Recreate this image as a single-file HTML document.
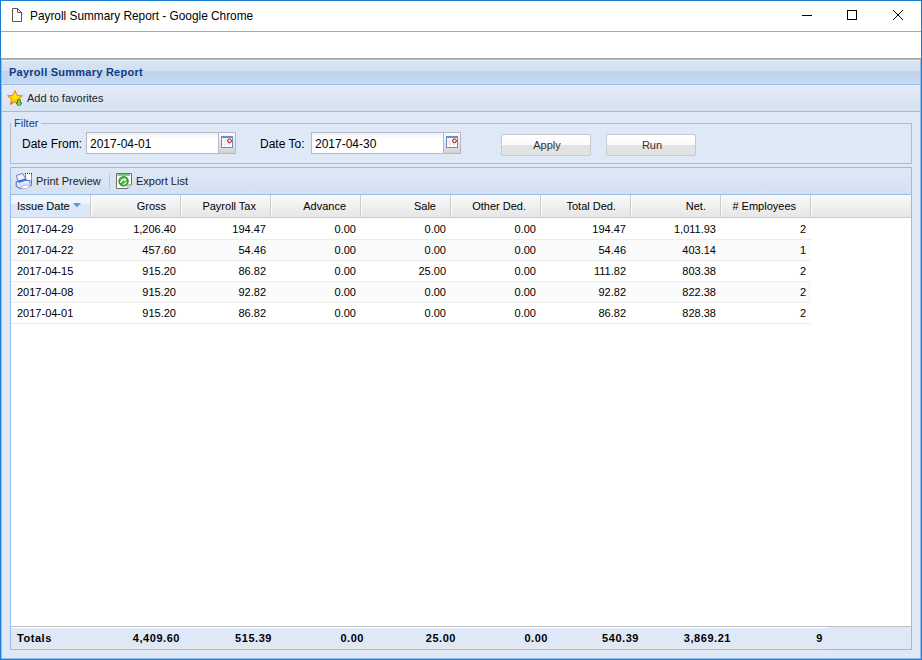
<!DOCTYPE html>
<html><head><meta charset="utf-8">
<style>
*{box-sizing:border-box;margin:0;padding:0}
html,body{width:922px;height:660px;overflow:hidden;background:#fff;font-family:"Liberation Sans",sans-serif;font-size:11px;color:#000}
.a{position:absolute}
.t{position:absolute;white-space:nowrap;line-height:13px}
#win{position:absolute;left:0;top:0;width:922px;height:660px;border:1px solid #1a7bd0;background:#fff}
</style></head><body>
<div id="win"></div>
<!-- title bar -->
<svg class="a" style="left:12px;top:8px" width="11" height="14" viewBox="0 0 11 14">
<path d="M0.5 0.5 H5.5 L9.5 4.5 V13.5 H0.5 Z M5.5 0.5 V4.5 H9.5" fill="none" stroke="#555" stroke-width="1"/>
</svg>
<div class="t" style="left:30px;top:9px;font-size:11.85px;line-height:14px;color:#000">Payroll Summary Report - Google Chrome</div>
<div class="a" style="left:802px;top:15px;width:10px;height:1px;background:#000"></div>
<div class="a" style="left:847px;top:10px;width:10px;height:10px;border:1px solid #000"></div>
<svg class="a" style="left:892px;top:9px" width="12" height="12" viewBox="0 0 12 12"><path d="M1 1 L11 11 M11 1 L1 11" stroke="#000" stroke-width="1"/></svg>
<div class="a" style="left:1px;top:31px;width:920px;height:1px;background:#a9a9a9"></div>
<div class="a" style="left:1px;top:58px;width:920px;height:1px;background:#a8a49e"></div>

<!-- main panel -->
<div class="a" style="left:1px;top:59px;width:920px;height:600px;border:1px solid #99bbe8;background:#dfe8f6"></div>
<!-- panel header -->
<div class="a" style="left:2px;top:60px;width:918px;height:24px;background:linear-gradient(#eef4fb 0px,#eef4fb 1px,#d9e5f4 1px,#d1dff2 11px,#bdd2ee 11px,#bdd2ee 12px,#c1d4ef 12px,#c5d8f0 23px,#cadbf2 23px)"></div>
<div class="a" style="left:1px;top:84px;width:920px;height:1px;background:#99bbe8"></div>
<div class="t" style="left:9px;top:66px;font-weight:bold;letter-spacing:0.25px;color:#0f3c87">Payroll Summary Report</div>
<!-- toolbar 1 -->
<div class="a" style="left:2px;top:85px;width:918px;height:26px;background:linear-gradient(#e4ecf7,#d6e3f3)"></div>
<div class="a" style="left:1px;top:111px;width:920px;height:1px;background:#99bbe8"></div>
<svg class="a" style="left:7px;top:90px" width="16" height="16" viewBox="0 0 16 16">
<defs><radialGradient id="sg" cx="0.5" cy="0.4" r="0.65"><stop offset="0" stop-color="#fff600"/><stop offset="0.55" stop-color="#ffc800"/><stop offset="1" stop-color="#f06000"/></radialGradient></defs>
<path d="M8 0.6 L10.1 5.4 L15.4 5.8 L11.4 9.3 L12.6 14.6 L8 11.8 L3.4 14.6 L4.6 9.3 L0.6 5.8 L5.9 5.4 Z" fill="url(#sg)" stroke="#ef6a10" stroke-width="0.8" stroke-linejoin="round"/>
<path d="M10.6 9.8 H13.4 V13 H15 L12 16.6 L9 13 H10.6 Z" fill="#82e050" stroke="#1f6a12" stroke-width="0.8"/>
</svg>
<div class="t" style="left:27px;top:92px;color:#222">Add to favorites</div>

<!-- fieldset -->
<div class="a" style="left:10px;top:123px;width:902px;height:41px;border:1px solid #b5b8c8"></div>
<div class="a" style="left:11px;top:118px;width:30px;height:10px;background:#dfe8f6"></div>
<div class="t" style="left:14px;top:117px;color:#15428b">Filter</div>
<div class="t" style="left:22px;top:137px;font-size:12px;line-height:15px;color:#000">Date From:</div>
<div class="a" style="left:86px;top:132px;width:150px;height:22px;border:1px solid #b5b8c8;background:linear-gradient(#eef0f0,#fff 6px)"></div>
<div class="t" style="left:90px;top:137px;font-size:12px;line-height:15px;color:#000">2017-04-01</div>
<div class="a" style="left:218px;top:132px;width:18px;height:22px;border:1px solid #b5b8c8;background:linear-gradient(#fdfdfd,#e6e6e6 10px,#d3d3d3)"></div>
<svg class="a" style="left:221px;top:136px" width="12" height="12" viewBox="0 0 12 12">
<rect x="0.5" y="0.5" width="11" height="11" fill="#fff" stroke="#6a8dc4"/><rect x="0" y="0" width="12" height="2" fill="#6a8dc4"/>
<path d="M4 2 V11 M7.5 2 V11 M1 5 H11 M1 8 H11" stroke="#e2e2ee" stroke-width="1"/>
<circle cx="8.5" cy="4.8" r="1.9" fill="none" stroke="#a80000" stroke-width="1"/>
</svg>
<div class="t" style="left:260px;top:137px;font-size:12px;line-height:15px;color:#000">Date To:</div>
<div class="a" style="left:311px;top:132px;width:150px;height:22px;border:1px solid #b5b8c8;background:linear-gradient(#eef0f0,#fff 6px)"></div>
<div class="t" style="left:315px;top:137px;font-size:12px;line-height:15px;color:#000">2017-04-30</div>
<div class="a" style="left:443px;top:132px;width:18px;height:22px;border:1px solid #b5b8c8;background:linear-gradient(#fdfdfd,#e6e6e6 10px,#d3d3d3)"></div>
<svg class="a" style="left:446px;top:136px" width="12" height="12" viewBox="0 0 12 12">
<rect x="0.5" y="0.5" width="11" height="11" fill="#fff" stroke="#6a8dc4"/><rect x="0" y="0" width="12" height="2" fill="#6a8dc4"/>
<path d="M4 2 V11 M7.5 2 V11 M1 5 H11 M1 8 H11" stroke="#e2e2ee" stroke-width="1"/>
<circle cx="8.5" cy="4.8" r="1.9" fill="none" stroke="#a80000" stroke-width="1"/>
</svg>
<div class="a" style="left:501px;top:134px;width:90px;height:22px;border:1px solid #c9c9c9;border-radius:2px;background:linear-gradient(#fff 0,#fbfbfb 10px,#e3e3e3 10px,#e3e3e3)"></div>
<div class="t" style="left:502px;top:139px;width:90px;text-align:center;color:#333">Apply</div>
<div class="a" style="left:606px;top:134px;width:90px;height:22px;border:1px solid #c9c9c9;border-radius:2px;background:linear-gradient(#fff 0,#fbfbfb 10px,#e3e3e3 10px,#e3e3e3)"></div>
<div class="t" style="left:607px;top:139px;width:90px;text-align:center;color:#333">Run</div>

<!-- grid panel -->
<div class="a" style="left:10px;top:167px;width:902px;height:483px;border:1px solid #99bbe8;background:#fff"></div>
<div class="a" style="left:11px;top:168px;width:900px;height:26px;background:linear-gradient(#dfe8f5,#d4e1f2)"></div>
<div class="a" style="left:11px;top:194px;width:900px;height:1px;background:#99bbe8"></div>
<div id="tb2">
<svg class="a" style="left:14px;top:171px" width="20" height="20" viewBox="14 171 20 20">
<rect x="25" y="173" width="7" height="7.5" fill="#fff"/>
<path d="M25 173.5 H32 M31.5 173.5 V180.5 M25.5 173.5 V179" stroke="#222" stroke-width="1" stroke-dasharray="1 1" fill="none"/>
<path d="M16.3 175.5 L22.6 173.4 L26.4 180.2 L18.6 182.2 Z" fill="#f4f2fc" stroke="#6d7bd6" stroke-width="1" stroke-linejoin="round"/>
<path d="M16.2 181.6 L24 179.8 L31.4 181 L31.6 185.4 L21 188.8 L16.2 186.4 Z" fill="#e3e1f6" stroke="#5567cf" stroke-width="1" stroke-linejoin="round"/>
<path d="M17.5 183.2 L24 181.4 L30.2 182.4" stroke="#f4f3fd" stroke-width="1" fill="none"/>
<path d="M18.4 182 L26.2 179.4" stroke="#1d7de8" stroke-width="2.2"/>
<path d="M21.5 186 L31.2 184.6 L26.5 188.6 L21.2 188.4 Z" fill="#fcfcff" stroke="#98a2e2" stroke-width="0.7"/>
<circle cx="29.6" cy="182.6" r="0.8" fill="#30b060"/>
</svg>
<div class="t" style="left:36px;top:175px;color:#222">Print Preview</div>
<div class="a" style="left:109px;top:174px;width:1px;height:15px;background:#b0c8ea"></div>
<svg class="a" style="left:116px;top:173px" width="16" height="16" viewBox="0 0 16 16">
<path d="M0.5 0.5 H15.5 V11.8 L11.8 15.5 H0.5 Z" fill="#fdfdfd" stroke="#6e6e6e" stroke-width="1"/>
<rect x="1.5" y="1.3" width="12.5" height="1.3" fill="#3eb04a"/>
<circle cx="7.6" cy="8.3" r="5.2" fill="#22a022"/>
<circle cx="7" cy="7.3" r="3.2" fill="#5cc65c" opacity="0.6"/>
<path d="M4.6 9.8 Q5.2 6.2 9 6.6" stroke="#eefaee" stroke-width="1.5" fill="none"/>
<path d="M8.2 4.8 L11 6.8 L8.4 8.6 Z" fill="#eefaee"/>
<path d="M10.6 8.6 Q10 11.6 6.4 11.2" stroke="#eefaee" stroke-width="1.2" fill="none"/>
<path d="M11.8 15.5 V11.8 H15.5" fill="#e8e8e8" stroke="#8a8a8a" stroke-width="0.8"/>
</svg>
<div class="t" style="left:136px;top:175px;color:#222">Export List</div>
</div>
<div id="gridbody">
<div class="a" style="left:11px;top:195px;width:900px;height:22px;background:linear-gradient(#fafafa,#f2f2f2 40%,#e6e6e6)"></div>
<div class="a" style="left:11px;top:195px;width:79px;height:22px;background:linear-gradient(#eef5fd 0,#eef5fd 9px,#dbe8f9 9px,#dbe8f9)"></div>
<div class="a" style="left:11px;top:217px;width:900px;height:1px;background:#c8c8c8"></div>
<div class="a" style="left:90px;top:195px;width:1px;height:22px;background:#cbcbcb"></div>
<div class="a" style="left:91px;top:195px;width:1px;height:22px;background:#fdfdfd"></div>
<div class="t" style="left:17px;top:200px;color:#000">Issue Date</div>
<svg class="a" style="left:73px;top:203px" width="8" height="5" viewBox="0 0 8 5"><path d="M0 0 H8 L4 4.5 Z" fill="#6a93cf"/></svg>
<div class="a" style="left:180px;top:195px;width:1px;height:22px;background:#cbcbcb"></div>
<div class="a" style="left:181px;top:195px;width:1px;height:22px;background:#fdfdfd"></div>
<div class="t" style="left:91px;top:200px;width:75px;text-align:right;color:#000">Gross</div>
<div class="a" style="left:270px;top:195px;width:1px;height:22px;background:#cbcbcb"></div>
<div class="a" style="left:271px;top:195px;width:1px;height:22px;background:#fdfdfd"></div>
<div class="t" style="left:181px;top:200px;width:75px;text-align:right;color:#000">Payroll Tax</div>
<div class="a" style="left:360px;top:195px;width:1px;height:22px;background:#cbcbcb"></div>
<div class="a" style="left:361px;top:195px;width:1px;height:22px;background:#fdfdfd"></div>
<div class="t" style="left:271px;top:200px;width:75px;text-align:right;color:#000">Advance</div>
<div class="a" style="left:450px;top:195px;width:1px;height:22px;background:#cbcbcb"></div>
<div class="a" style="left:451px;top:195px;width:1px;height:22px;background:#fdfdfd"></div>
<div class="t" style="left:361px;top:200px;width:75px;text-align:right;color:#000">Sale</div>
<div class="a" style="left:540px;top:195px;width:1px;height:22px;background:#cbcbcb"></div>
<div class="a" style="left:541px;top:195px;width:1px;height:22px;background:#fdfdfd"></div>
<div class="t" style="left:451px;top:200px;width:75px;text-align:right;color:#000">Other Ded.</div>
<div class="a" style="left:630px;top:195px;width:1px;height:22px;background:#cbcbcb"></div>
<div class="a" style="left:631px;top:195px;width:1px;height:22px;background:#fdfdfd"></div>
<div class="t" style="left:541px;top:200px;width:75px;text-align:right;color:#000">Total Ded.</div>
<div class="a" style="left:720px;top:195px;width:1px;height:22px;background:#cbcbcb"></div>
<div class="a" style="left:721px;top:195px;width:1px;height:22px;background:#fdfdfd"></div>
<div class="t" style="left:631px;top:200px;width:75px;text-align:right;color:#000">Net.</div>
<div class="a" style="left:810px;top:195px;width:1px;height:22px;background:#cbcbcb"></div>
<div class="a" style="left:811px;top:195px;width:1px;height:22px;background:#fdfdfd"></div>
<div class="t" style="left:721px;top:200px;width:75px;text-align:right;color:#000"># Employees</div>
<div class="a" style="left:11px;top:219px;width:800px;height:20px;background:#fff"></div>
<div class="a" style="left:11px;top:239px;width:800px;height:1px;background:#ededed"></div>
<div class="t" style="left:17px;top:223px">2017-04-29</div>
<div class="t" style="left:91px;top:223px;width:85px;text-align:right">1,206.40</div>
<div class="t" style="left:181px;top:223px;width:85px;text-align:right">194.47</div>
<div class="t" style="left:271px;top:223px;width:85px;text-align:right">0.00</div>
<div class="t" style="left:361px;top:223px;width:85px;text-align:right">0.00</div>
<div class="t" style="left:451px;top:223px;width:85px;text-align:right">0.00</div>
<div class="t" style="left:541px;top:223px;width:85px;text-align:right">194.47</div>
<div class="t" style="left:631px;top:223px;width:85px;text-align:right">1,011.93</div>
<div class="t" style="left:721px;top:223px;width:85px;text-align:right">2</div>
<div class="a" style="left:11px;top:240px;width:800px;height:20px;background:#fafafa"></div>
<div class="a" style="left:11px;top:260px;width:800px;height:1px;background:#ededed"></div>
<div class="t" style="left:17px;top:244px">2017-04-22</div>
<div class="t" style="left:91px;top:244px;width:85px;text-align:right">457.60</div>
<div class="t" style="left:181px;top:244px;width:85px;text-align:right">54.46</div>
<div class="t" style="left:271px;top:244px;width:85px;text-align:right">0.00</div>
<div class="t" style="left:361px;top:244px;width:85px;text-align:right">0.00</div>
<div class="t" style="left:451px;top:244px;width:85px;text-align:right">0.00</div>
<div class="t" style="left:541px;top:244px;width:85px;text-align:right">54.46</div>
<div class="t" style="left:631px;top:244px;width:85px;text-align:right">403.14</div>
<div class="t" style="left:721px;top:244px;width:85px;text-align:right">1</div>
<div class="a" style="left:11px;top:261px;width:800px;height:20px;background:#fff"></div>
<div class="a" style="left:11px;top:281px;width:800px;height:1px;background:#ededed"></div>
<div class="t" style="left:17px;top:265px">2017-04-15</div>
<div class="t" style="left:91px;top:265px;width:85px;text-align:right">915.20</div>
<div class="t" style="left:181px;top:265px;width:85px;text-align:right">86.82</div>
<div class="t" style="left:271px;top:265px;width:85px;text-align:right">0.00</div>
<div class="t" style="left:361px;top:265px;width:85px;text-align:right">25.00</div>
<div class="t" style="left:451px;top:265px;width:85px;text-align:right">0.00</div>
<div class="t" style="left:541px;top:265px;width:85px;text-align:right">111.82</div>
<div class="t" style="left:631px;top:265px;width:85px;text-align:right">803.38</div>
<div class="t" style="left:721px;top:265px;width:85px;text-align:right">2</div>
<div class="a" style="left:11px;top:282px;width:800px;height:20px;background:#fafafa"></div>
<div class="a" style="left:11px;top:302px;width:800px;height:1px;background:#ededed"></div>
<div class="t" style="left:17px;top:286px">2017-04-08</div>
<div class="t" style="left:91px;top:286px;width:85px;text-align:right">915.20</div>
<div class="t" style="left:181px;top:286px;width:85px;text-align:right">92.82</div>
<div class="t" style="left:271px;top:286px;width:85px;text-align:right">0.00</div>
<div class="t" style="left:361px;top:286px;width:85px;text-align:right">0.00</div>
<div class="t" style="left:451px;top:286px;width:85px;text-align:right">0.00</div>
<div class="t" style="left:541px;top:286px;width:85px;text-align:right">92.82</div>
<div class="t" style="left:631px;top:286px;width:85px;text-align:right">822.38</div>
<div class="t" style="left:721px;top:286px;width:85px;text-align:right">2</div>
<div class="a" style="left:11px;top:303px;width:800px;height:20px;background:#fff"></div>
<div class="a" style="left:11px;top:323px;width:800px;height:1px;background:#ededed"></div>
<div class="t" style="left:17px;top:307px">2017-04-01</div>
<div class="t" style="left:91px;top:307px;width:85px;text-align:right">915.20</div>
<div class="t" style="left:181px;top:307px;width:85px;text-align:right">86.82</div>
<div class="t" style="left:271px;top:307px;width:85px;text-align:right">0.00</div>
<div class="t" style="left:361px;top:307px;width:85px;text-align:right">0.00</div>
<div class="t" style="left:451px;top:307px;width:85px;text-align:right">0.00</div>
<div class="t" style="left:541px;top:307px;width:85px;text-align:right">86.82</div>
<div class="t" style="left:631px;top:307px;width:85px;text-align:right">828.38</div>
<div class="t" style="left:721px;top:307px;width:85px;text-align:right">2</div>
<div class="a" style="left:11px;top:626px;width:900px;height:23px;background:#dfe8f6"></div>
<div class="a" style="left:11px;top:626px;width:900px;height:1px;background:#c0c0c0"></div>
<div class="a" style="left:11px;top:627px;width:817px;height:1px;background:#fff"></div>
<div class="a" style="left:11px;top:648px;width:817px;height:1px;background:#ede9e3"></div>
<div class="t" style="left:17px;top:632px;font-weight:bold;letter-spacing:0.55px">Totals</div>
<div class="t" style="left:93px;top:632px;width:87px;text-align:right;font-weight:bold;letter-spacing:0.55px">4,409.60</div>
<div class="t" style="left:185px;top:632px;width:87px;text-align:right;font-weight:bold;letter-spacing:0.55px">515.39</div>
<div class="t" style="left:277px;top:632px;width:87px;text-align:right;font-weight:bold;letter-spacing:0.55px">0.00</div>
<div class="t" style="left:369px;top:632px;width:87px;text-align:right;font-weight:bold;letter-spacing:0.55px">25.00</div>
<div class="t" style="left:461px;top:632px;width:87px;text-align:right;font-weight:bold;letter-spacing:0.55px">0.00</div>
<div class="t" style="left:553px;top:632px;width:86px;text-align:right;font-weight:bold;letter-spacing:0.55px">540.39</div>
<div class="t" style="left:645px;top:632px;width:86px;text-align:right;font-weight:bold;letter-spacing:0.55px">3,869.21</div>
<div class="t" style="left:737px;top:632px;width:86px;text-align:right;font-weight:bold;letter-spacing:0.55px">9</div>
</div>
</body></html>
